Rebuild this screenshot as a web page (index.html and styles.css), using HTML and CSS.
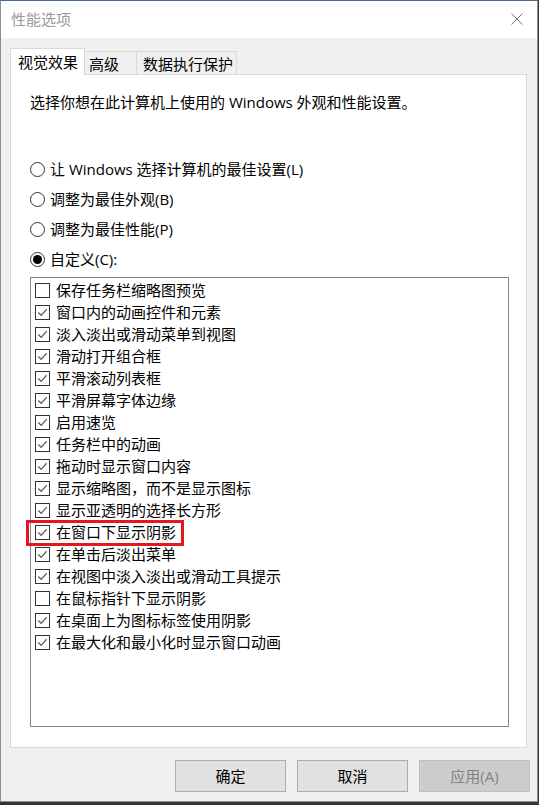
FILE: index.html
```html
<!DOCTYPE html>
<html lang="zh-CN">
<head>
<meta charset="utf-8">
<title>性能选项</title>
<link rel="stylesheet" href="styles.css">
</head>
<body>
<div class="window">
  <div class="titlebar">
    <span class="title">性能选项</span>
    <span class="close" aria-label="关闭">
      <svg width="12" height="12" viewBox="0 0 12 12"><path d="M0.5 0.5 L11.5 11.5 M11.5 0.5 L0.5 11.5" stroke="#7a7a7a" stroke-width="1" fill="none"/></svg>
    </span>
  </div>
  <div class="tabs">
    <div class="tab active">视觉效果</div>
    <div class="tab t2">高级</div>
    <div class="tab t3">数据执行保护</div>
  </div>
  <div class="panel">
    <p class="desc">选择你想在此计算机上使用的 Windows 外观和性能设置。</p>
    <div class="radios">
      <div class="radio-row"><span class="radio"></span><span>让 Windows 选择计算机的最佳设置(L)</span></div>
      <div class="radio-row"><span class="radio"></span><span>调整为最佳外观(B)</span></div>
      <div class="radio-row"><span class="radio"></span><span>调整为最佳性能(P)</span></div>
      <div class="radio-row"><span class="radio checked"></span><span>自定义(C):</span></div>
    </div>
    <div class="listbox">
      <div class="item"><span class="cb"></span><span>保存任务栏缩略图预览</span></div>
      <div class="item"><span class="cb on"><svg viewBox="0 0 14 14"><polyline points="2.5,7 5.5,10 11.5,3.5"/></svg></span><span>窗口内的动画控件和元素</span></div>
      <div class="item"><span class="cb on"><svg viewBox="0 0 14 14"><polyline points="2.5,7 5.5,10 11.5,3.5"/></svg></span><span>淡入淡出或滑动菜单到视图</span></div>
      <div class="item"><span class="cb on"><svg viewBox="0 0 14 14"><polyline points="2.5,7 5.5,10 11.5,3.5"/></svg></span><span>滑动打开组合框</span></div>
      <div class="item"><span class="cb on"><svg viewBox="0 0 14 14"><polyline points="2.5,7 5.5,10 11.5,3.5"/></svg></span><span>平滑滚动列表框</span></div>
      <div class="item"><span class="cb on"><svg viewBox="0 0 14 14"><polyline points="2.5,7 5.5,10 11.5,3.5"/></svg></span><span>平滑屏幕字体边缘</span></div>
      <div class="item"><span class="cb on"><svg viewBox="0 0 14 14"><polyline points="2.5,7 5.5,10 11.5,3.5"/></svg></span><span>启用速览</span></div>
      <div class="item"><span class="cb on"><svg viewBox="0 0 14 14"><polyline points="2.5,7 5.5,10 11.5,3.5"/></svg></span><span>任务栏中的动画</span></div>
      <div class="item"><span class="cb on"><svg viewBox="0 0 14 14"><polyline points="2.5,7 5.5,10 11.5,3.5"/></svg></span><span>拖动时显示窗口内容</span></div>
      <div class="item"><span class="cb on"><svg viewBox="0 0 14 14"><polyline points="2.5,7 5.5,10 11.5,3.5"/></svg></span><span>显示缩略图，而不是显示图标</span></div>
      <div class="item"><span class="cb on"><svg viewBox="0 0 14 14"><polyline points="2.5,7 5.5,10 11.5,3.5"/></svg></span><span>显示亚透明的选择长方形</span></div>
      <div class="item"><span class="cb on"><svg viewBox="0 0 14 14"><polyline points="2.5,7 5.5,10 11.5,3.5"/></svg></span><span>在窗口下显示阴影</span></div>
      <div class="item"><span class="cb on"><svg viewBox="0 0 14 14"><polyline points="2.5,7 5.5,10 11.5,3.5"/></svg></span><span>在单击后淡出菜单</span></div>
      <div class="item"><span class="cb on"><svg viewBox="0 0 14 14"><polyline points="2.5,7 5.5,10 11.5,3.5"/></svg></span><span>在视图中淡入淡出或滑动工具提示</span></div>
      <div class="item"><span class="cb"></span><span>在鼠标指针下显示阴影</span></div>
      <div class="item"><span class="cb on"><svg viewBox="0 0 14 14"><polyline points="2.5,7 5.5,10 11.5,3.5"/></svg></span><span>在桌面上为图标标签使用阴影</span></div>
      <div class="item"><span class="cb on"><svg viewBox="0 0 14 14"><polyline points="2.5,7 5.5,10 11.5,3.5"/></svg></span><span>在最大化和最小化时显示窗口动画</span></div>
      <div class="highlight"></div>
    </div>
  </div>
  <div class="buttons">
    <button class="btn">确定</button>
    <button class="btn">取消</button>
    <button class="btn disabled">应用(A)</button>
  </div>
</div>
</body>
</html>
```
FILE: styles.css
```css
html, body {
  margin: 0;
  padding: 0;
}
body {
  background: #3b3230;
  width: 539px;
  height: 805px;
  overflow: hidden;
  font-family: "Open Sans", "Noto Sans CJK SC", sans-serif;
  font-size: 15px;
  color: #000;
}
.window {
  box-sizing: border-box;
  width: 538px;
  height: 802px;
  background: #f0f0f0;
  border: 1px solid #8a8f96;
  border-top-color: #4a6a8f;
  display: flex;
  flex-direction: column;
}
.titlebar {
  height: 37px;
  background: #fff;
  display: flex;
  align-items: center;
  justify-content: space-between;
  padding: 0 14px 0 10px;
  flex-shrink: 0;
}
.title {
  color: #999;
  font-size: 15px;
  line-height: 20px;
  padding-bottom: 1px;
}
.close {
  display: flex;
  width: 12px;
  height: 12px;
  margin-bottom: 1px;
}
.tabs {
  display: flex;
  align-items: flex-end;
  margin-top: 10px;
  padding-left: 9px;
  height: 26px;
  position: relative;
  z-index: 2;
}
.tab {
  box-sizing: border-box;
  height: 23px;
  border: 1px solid #d9d9d9;
  border-bottom: none;
  background: #f0f0f0;
  display: flex;
  align-items: center;
  justify-content: flex-start;
  line-height: 20px;
  padding-top: 1px;
}
.tab.active {
  width: 75px;
  height: 27px;
  background: #fff;
  margin-bottom: -1px;
  padding: 0 0 1px 7px;
}
.tab.t2 {
  width: 52px;
  border-left: none;
  padding-left: 4px;
}
.tab.t3 {
  width: 100px;
  border-left: none;
  padding-left: 6px;
}
.panel {
  box-sizing: border-box;
  margin-left: 9px;
  width: 517px;
  height: 674px;
  background: #fff;
  border: 1px solid #d9d9d9;
  padding: 16px 0 0 19px;
  position: relative;
  z-index: 1;
}
.desc {
  margin: 0;
  line-height: 22px;
}
.radios {
  margin-top: 45px;
  display: flex;
  flex-direction: column;
  gap: 8px;
}
.radio-row {
  display: flex;
  align-items: center;
  height: 22px;
  line-height: 22px;
  gap: 5px;
}
.radio {
  box-sizing: border-box;
  width: 15px;
  height: 15px;
  border: 1px solid #333;
  border-radius: 50%;
  background: #fff;
  display: flex;
  align-items: center;
  justify-content: center;
  flex-shrink: 0;
}
.radio.checked::after {
  content: "";
  width: 9px;
  height: 9px;
  border-radius: 50%;
  background: #000;
}
.listbox {
  box-sizing: border-box;
  margin-top: 7px;
  width: 479px;
  height: 450px;
  border: 1px solid #828790;
  padding: 1px 0 0 4px;
  position: relative;
}
.item {
  display: flex;
  align-items: center;
  height: 22px;
  line-height: 22px;
  gap: 6px;
}
.cb {
  box-sizing: border-box;
  width: 15px;
  height: 15px;
  border: 1px solid #333;
  background: #fff;
  flex-shrink: 0;
  display: flex;
}
.cb svg {
  width: 13px;
  height: 13px;
}
.cb polyline {
  fill: none;
  stroke: #5a5a5a;
  stroke-width: 1.3;
}
.highlight {
  position: absolute;
  left: -5px;
  top: 242px;
  width: 158px;
  height: 26px;
  box-sizing: border-box;
  border: 3px solid #e4161e;
  pointer-events: none;
}
.buttons {
  display: flex;
  justify-content: flex-end;
  gap: 11px;
  padding-right: 7px;
  margin-top: 12px;
}
.btn {
  box-sizing: border-box;
  width: 111px;
  height: 32px;
  background: #e1e1e1;
  border: 1px solid #adadad;
  font-family: "Open Sans", "Noto Sans CJK SC", sans-serif;
  font-size: 15px;
  color: #000;
  padding: 0;
  line-height: 20px;
}
.btn.disabled {
  background: #cccccc;
  border-color: #bfbfbf;
  color: #838383;
}
```
